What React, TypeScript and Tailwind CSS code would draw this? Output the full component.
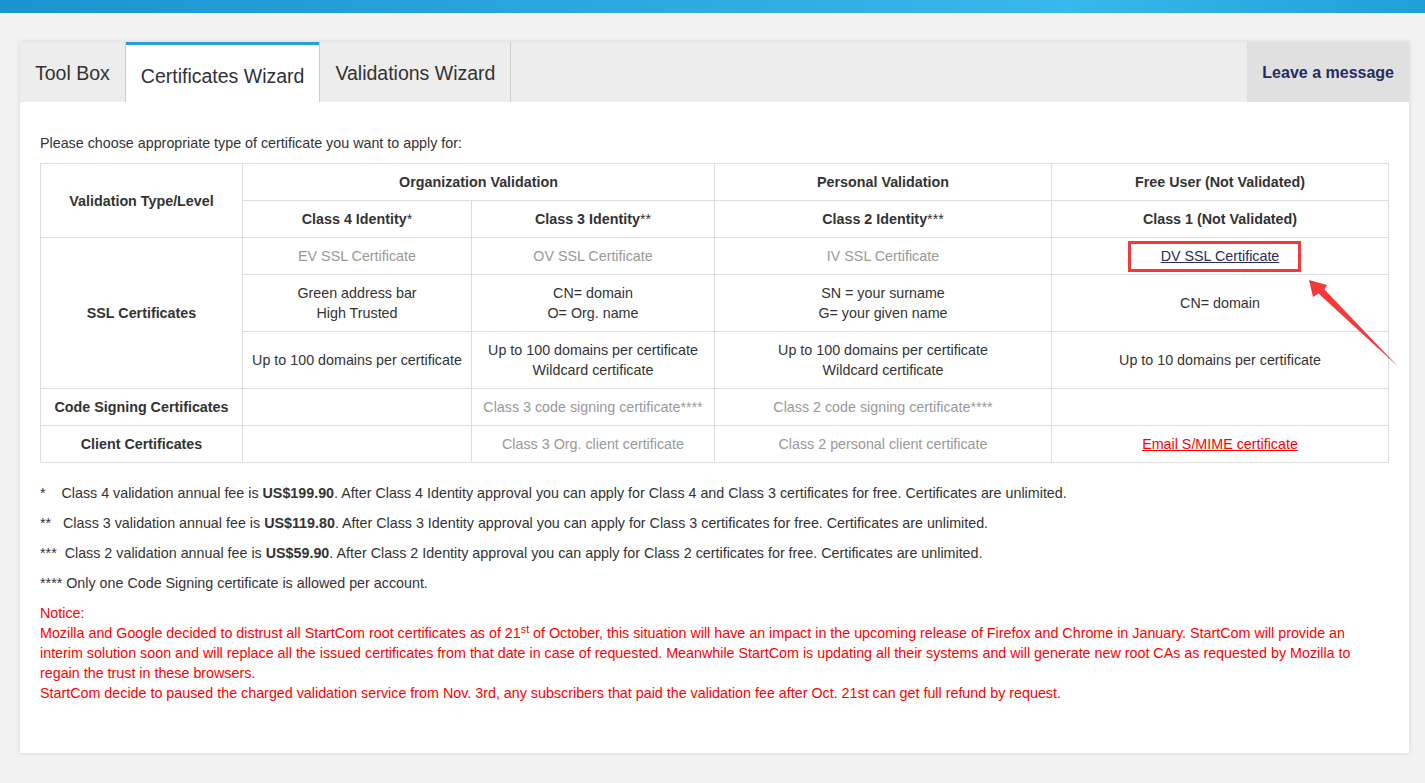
import React from "react";

const gray = "text-[#999]";

function Cell({ children, className = "", rowSpan, colSpan }: { children?: React.ReactNode; className?: string; rowSpan?: number; colSpan?: number }) {
  return (
    <td rowSpan={rowSpan} colSpan={colSpan} className={"whitespace-nowrap border border-[#ddd] px-[8px] py-[8px] text-center align-middle " + className}>
      {children}
    </td>
  );
}

export default function App() {
  return (
    <div className="relative min-h-screen bg-[#f2f2f2] font-['Liberation_Sans',Arial,sans-serif] text-[#333]">
      <div className="h-[13px] bg-linear-to-r from-[#1a93cf] via-[#3ab7ec] via-75% to-[#1f9fd8]" />
      <div className="ml-[20px] mt-[29px] w-[1389px] bg-white shadow-[0_0_5px_rgba(0,0,0,0.13)]">
        <div className="flex h-[60px] bg-[#ededed]">
          <div className="flex items-center border-r border-[#ccc] px-[15px] pt-[4px] text-[19.5px] text-[#333]">Tool Box</div>
          <div className="flex items-center border-t-[3px] border-[#2a9fd8] bg-white px-[15px] pt-[7px] text-[19.5px] text-[#2d3040]">Certificates Wizard</div>
          <div className="flex items-center border-x border-[#ccc] px-[15px] pt-[4px] text-[19.5px] text-[#333]">Validations Wizard</div>
          <div className="flex-1" />
          <div className="flex items-center bg-[#e0e0e0] px-[15px] pt-[2px] text-[16px] font-bold text-[#272c5f]">Leave a message</div>
        </div>
        <div className="px-[20px] pt-[31px] pb-[50px] text-[14.3px] leading-[20px]">
          <p>Please choose appropriate type of certificate you want to apply for:</p>
          <table className="mt-[10px] w-[1348px] table-fixed border-collapse">
            <colgroup>
              <col className="w-[202px]" />
              <col className="w-[229px]" />
              <col className="w-[243px]" />
              <col className="w-[337px]" />
              <col className="w-[337px]" />
            </colgroup>
            <tbody>
              <tr>
                <Cell rowSpan={2} className="font-bold">Validation Type/Level</Cell>
                <Cell colSpan={2} className="font-bold">Organization Validation</Cell>
                <Cell className="font-bold">Personal Validation</Cell>
                <Cell className="font-bold">Free User (Not Validated)</Cell>
              </tr>
              <tr>
                <Cell className="font-bold">Class 4 Identity<span className="font-normal">*</span></Cell>
                <Cell className="font-bold">Class 3 Identity<span className="font-normal">**</span></Cell>
                <Cell className="font-bold">Class 2 Identity<span className="font-normal">***</span></Cell>
                <Cell className="font-bold">Class 1 (Not Validated)</Cell>
              </tr>
              <tr>
                <Cell rowSpan={3} className="font-bold">SSL Certificates</Cell>
                <Cell className={gray}>EV SSL Certificate</Cell>
                <Cell className={gray}>OV SSL Certificate</Cell>
                <Cell className={gray}>IV SSL Certificate</Cell>
                <Cell><a href="#" className="text-[#272c5f] underline">DV SSL Certificate</a></Cell>
              </tr>
              <tr>
                <Cell>Green address bar<br />High Trusted</Cell>
                <Cell>CN= domain<br />O= Org. name</Cell>
                <Cell>SN = your surname<br />G= your given name</Cell>
                <Cell>CN= domain</Cell>
              </tr>
              <tr>
                <Cell>Up to 100 domains per certificate</Cell>
                <Cell>Up to 100 domains per certificate<br />Wildcard certificate</Cell>
                <Cell>Up to 100 domains per certificate<br />Wildcard certificate</Cell>
                <Cell>Up to 10 domains per certificate</Cell>
              </tr>
              <tr>
                <Cell className="font-bold">Code Signing Certificates</Cell>
                <Cell />
                <Cell className={gray}>Class 3 code signing certificate****</Cell>
                <Cell className={gray}>Class 2 code signing certificate****</Cell>
                <Cell />
              </tr>
              <tr>
                <Cell className="font-bold">Client Certificates</Cell>
                <Cell />
                <Cell className={gray}>Class 3 Org. client certificate</Cell>
                <Cell className={gray}>Class 2 personal client certificate</Cell>
                <Cell><a href="#" className="text-[#f00] underline">Email S/MIME certificate</a></Cell>
              </tr>
            </tbody>
          </table>
          <p className="mt-[20px]">{"*\u00a0\u00a0\u00a0\u00a0"}Class 4 validation annual fee is <b>US$199.90</b>. After Class 4 Identity approval you can apply for Class 4 and Class 3 certificates for free. Certificates are unlimited.</p>
          <p className="mt-[10px]">{"**\u00a0\u00a0\u00a0"}Class 3 validation annual fee is <b>US$119.80</b>. After Class 3 Identity approval you can apply for Class 3 certificates for free. Certificates are unlimited.</p>
          <p className="mt-[10px]">{"***\u00a0\u00a0"}Class 2 validation annual fee is <b>US$59.90</b>. After Class 2 Identity approval you can apply for Class 2 certificates for free. Certificates are unlimited.</p>
          <p className="mt-[10px]">{"****\u00a0"}Only one Code Signing certificate is allowed per account.</p>
          <div className="mt-[10px] text-[#f00]">
            <p>Notice:</p>
            <p>
              Mozilla and Google decided to distrust all StartCom root certificates as of 21<sup>st</sup> of October, this situation will have an impact in the upcoming release of Firefox and Chrome in January. StartCom will provide an interim solution soon and will replace all the issued certificates from that date in case of requested. Meanwhile StartCom is updating all their systems and will generate new root CAs as requested by Mozilla to regain the trust in these browsers.
            </p>
            <p>StartCom decide to paused the charged validation service from Nov. 3rd, any subscribers that paid the validation fee after Oct. 21st can get full refund by request.</p>
          </div>
        </div>
      </div>
      <svg className="pointer-events-none absolute left-0 top-0" width="1425" height="783" viewBox="0 0 1425 783">
        <rect x="1129.5" y="242.5" width="170" height="28" fill="none" stroke="#f23a3a" strokeWidth="3" />
        <polygon points="1309,280 1327,285 1324.5,289.5 1398.5,367 1318.5,293.5 1313,297" fill="#f23a3a" />
      </svg>
    </div>
  );
}
